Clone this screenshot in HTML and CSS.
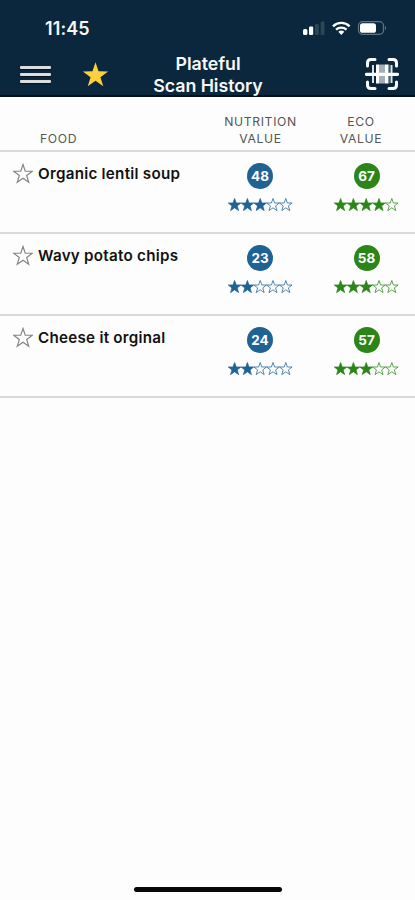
FILE: index.html
```html
<!DOCTYPE html>
<html lang="en">
<head>
<meta charset="utf-8">
<title>Plateful Scan History</title>
<link rel="stylesheet" href="styles.css">
</head>
<body>
<svg class="defs" width="0" height="0">
  <symbol id="star" viewBox="0 0 24 24"><path d="M12 1.2 14.7 9.2 23.2 9.3 16.4 14.4 18.9 22.5 12 17.6 5.1 22.5 7.6 14.4.8 9.3 9.3 9.2Z"/></symbol>
  <symbol id="five" viewBox="0 0 65 14">
    <path id="s" d="M6.600 .5 8.200 5H12.900L9.200 7.900 10.600 12.600 6.600 9.800 2.600 12.600 4 7.900 .3 5H5Z"/>
    <use href="#s" x="12.8"/><use href="#s" x="25.6"/><use href="#s" x="38.4"/><use href="#s" x="51.2"/>
  </symbol>
</svg>
<div class="screen">
  <header class="top">
    <div class="status">
      <span class="time">11:45</span>
      <svg class="indicators" width="86" height="18" viewBox="0 0 86 18">
        <g fill="#fff"><rect x="1" y="10" width="4.4" height="6" rx="1.6"/><rect x="7" y="7.5" width="4.2" height="8.5" rx="1.2"/></g>
        <g fill="#2c4655"><rect x="13" y="5" width="3.8" height="11" rx="1"/><rect x="18.7" y="2.5" width="3.8" height="13.5" rx="1"/></g>
        <g fill="none" stroke="#fff" stroke-width="2.3"><path d="M31 7.3a12 12 0 0 1 16.600 0"/><path d="M34 10.600a8 8 0 0 1 10.600 0"/></g>
        <path d="M36.300 12.700q3-2.300 6 0l-3 3.200z" fill="#fff"/>
        <rect x="56.500" y="2.700" width="25" height="12.600" rx="4" fill="none" stroke="#60727e" stroke-width="1.300"/>
        <rect x="58" y="4.200" width="16" height="9.600" rx="2.600" fill="#fff"/>
        <path d="M83 6.800q2 2.200 0 4.400z" fill="#71818a"/>
      </svg>
    </div>
    <div class="nav">
      <div class="menu"><i></i><i></i><i></i></div>
      <svg class="fav"><use href="#star"/></svg>
      <h1>Plateful<br>Scan History</h1>
      <svg class="scan" width="34" height="34" viewBox="0 0 34 34">
        <g fill="none" stroke="#fff" stroke-width="3" stroke-linecap="round"><path d="M2.500 9V6Q2.500 2.500 6 2.500H10M24 2.500H28Q31.500 2.500 31.500 6V9M31.500 25V28Q31.500 31.500 28 31.500H24M10 31.500H6Q2.500 31.500 2.500 28V25"/></g>
        <path d="M7 8h2v18H7zM25.500 8h2v18h-2z" fill="#dce2e5"/>
        <path d="M11 7.500h3v19h-3zM20 7.500h3v19h-3z" fill="#fff"/>
        <path d="M14 7.500h6v19h-6z" fill="#a5afb5"/><path d="M23 7.500h1.500v19H23z" fill="#8998a1"/>
        <path d="M1.500 17.300h31" stroke="#fff" stroke-width="3.200" stroke-linecap="round"/>
      </svg>
    </div>
  </header>
  <main>
    <div class="row head"><div class="food">FOOD</div><div class="nutrition">NUTRITION<br>VALUE</div><div class="eco">ECO<br>VALUE</div></div>
    <div class="row item">
      <div class="food"><svg class="mark"><use href="#star"/></svg><span class="name">Organic lentil soup</span></div>
      <div class="nutrition"><b>48</b><div class="rating"><svg class="line"><use href="#five"/></svg><div class="fill f3"><svg><use href="#five"/></svg></div></div></div>
      <div class="eco"><b>67</b><div class="rating"><svg class="line"><use href="#five"/></svg><div class="fill f4"><svg><use href="#five"/></svg></div></div></div>
    </div>
    <div class="row item">
      <div class="food"><svg class="mark"><use href="#star"/></svg><span class="name">Wavy potato chips</span></div>
      <div class="nutrition"><b>23</b><div class="rating"><svg class="line"><use href="#five"/></svg><div class="fill f2"><svg><use href="#five"/></svg></div></div></div>
      <div class="eco"><b>58</b><div class="rating"><svg class="line"><use href="#five"/></svg><div class="fill f3"><svg><use href="#five"/></svg></div></div></div>
    </div>
    <div class="row item">
      <div class="food"><svg class="mark"><use href="#star"/></svg><span class="name">Cheese it orginal</span></div>
      <div class="nutrition"><b>24</b><div class="rating"><svg class="line"><use href="#five"/></svg><div class="fill f2"><svg><use href="#five"/></svg></div></div></div>
      <div class="eco"><b>57</b><div class="rating"><svg class="line"><use href="#five"/></svg><div class="fill f3"><svg><use href="#five"/></svg></div></div></div>
    </div>
  </main>
  <div class="home"></div>
</div>
</body>
</html>
```
FILE: styles.css
```css
* { box-sizing: border-box; }
body { margin: 0; background: #fdfdfd; font-family: Inter, "Liberation Sans", sans-serif; color: #111; }
svg { display: block; flex: none; }
.defs { position: absolute; }
.screen { width: 415px; height: 900px; display: flex; flex-direction: column; overflow: hidden; }
.top { height: 97px; flex: none; background: #0b273d; border-bottom: 2px solid #03101b; color: #f7f7f7; }
.status { height: 53px; padding: 19px 27px 0 45px; display: flex; justify-content: space-between; align-items: flex-start; }
.time { font-size: 18px; line-height: 19px; font-weight: 600; letter-spacing: .1px; }
.nav { height: 42px; display: grid; grid-template-columns: 62px 47px 198px 58px 50px; align-items: start; }
.menu { width: 31px; margin: 13px 0 0 20px; padding-bottom: 1px; display: grid; gap: 4px; }
.menu i { height: 3px; border-radius: 1px; background: #dedddd; box-shadow: 0 1px 1px #06131f; }
.fav { width: 27px; height: 27px; margin: 8px 0 0 20px; fill: #fcd03c; }
h1 { margin: 0; font-size: 17.8px; line-height: 21.5px; font-weight: 600; text-align: center; letter-spacing: -.05px; }
.scan { grid-column: 5; margin: 4px 0 0; }
main { flex: 1; }
.row { display: grid; grid-template-columns: 207px 107px 101px; border-bottom: 2px solid #d9d9d9; }
.head { height: 55px; padding-bottom: 3px; align-items: end; color: #555; font-size: 12.2px; line-height: 17px; letter-spacing: .65px; text-align: center; }
.head .food { text-align: left; padding-left: 40px; }
.head .eco { padding-right: 7px; }
.item { height: 82px; }
.item .food { display: flex; align-items: flex-start; padding: 11px 0 0 13px; }
.mark { width: 20px; height: 21px; fill: none; stroke: #858585; stroke-width: 1.4; }
.name { margin-left: 5px; font-size: 15.200px; line-height: 22px; font-weight: 600; letter-spacing: .26px; white-space: nowrap; }
.item .nutrition, .item .eco { display: flex; flex-direction: column; align-items: center; padding-top: 11px; }
.item .nutrition { color: #1f6294; padding-right: 1px; }
.item .eco { color: #2c8519; padding-left: 4px; }
b { width: 26px; height: 26px; border-radius: 50%; background: currentColor; font-size: 13.5px; line-height: 26px; font-weight: 700; text-align: center; -webkit-text-fill-color: #fff; }
.rating { width: 65px; height: 14px; margin-top: 9px; display: grid; }
.rating > * { grid-area: 1 / 1; }
.rating svg { width: 65px; height: 14px; fill: currentColor; }
.rating .line { fill: none; stroke: currentColor; stroke-width: .75; }
.fill { overflow: hidden; }
.f2 { width: 25.800px; }
.f3 { width: 38.600px; }
.f4 { width: 51.400px; }
.home { flex: none; width: 148px; height: 5px; margin: 0 auto 8px 134px; border-radius: 3px; background: #080808; }
```
